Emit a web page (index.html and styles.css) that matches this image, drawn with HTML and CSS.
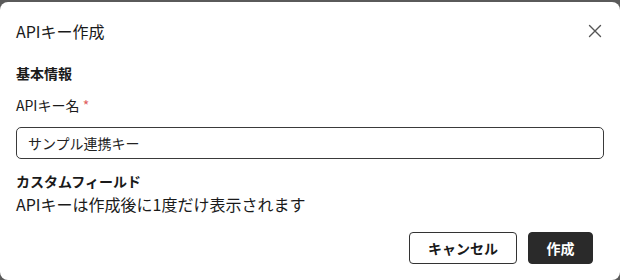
FILE: index.html
```html
<!DOCTYPE html>
<html lang="ja">
<head>
    <meta charset="UTF-8">
    <title>APIキー作成</title>
    <link rel="stylesheet" href="styles.css">
</head>
<body>
    <div class="dialog">
        <div class="dialog-header">
            <h1 class="dialog-title">APIキー作成</h1>
            <button class="close-button" aria-label="閉じる">
                <svg width="16" height="16" viewBox="0 0 16 16">
                    <path d="M2.5 2.5 L13.5 13.5 M13.5 2.5 L2.5 13.5" stroke="#555" stroke-width="1.4" stroke-linecap="round" fill="none"/>
                </svg>
            </button>
        </div>

        <h2 class="section-title">基本情報</h2>
        <label class="field-label" for="key-name">APIキー名 <span class="required">*</span></label>
        <input class="text-input" id="key-name" type="text" value="サンプル連携キー">

        <h2 class="section-title custom">カスタムフィールド</h2>
        <p class="note">APIキーは作成後に1度だけ表示されます</p>

        <div class="dialog-footer">
            <button class="button button-outline">キャンセル</button>
            <button class="button button-primary">作成</button>
        </div>
    </div>
</body>
</html>
```

FILE: styles.css
```css
body {
    margin: 0;
    padding-top: 2px;
    height: 280px;
    box-sizing: border-box;
    background: #5a5a5a;
    font-family: "Noto Sans CJK JP", "Noto Sans", sans-serif;
    color: #1a1a1a;
}

.dialog {
    height: 278px;
    box-sizing: border-box;
    background: #fff;
    border-radius: 8px;
    padding: 0 16px;
}

.dialog-header {
    display: flex;
    justify-content: space-between;
    align-items: center;
    padding: 17px 0 20px;
}

.dialog-title {
    margin: 0;
    font-size: 16px;
    font-weight: 400;
    line-height: 24px;
}

.close-button {
    display: flex;
    padding: 0;
    margin-right: 1px;
    border: none;
    background: none;
    cursor: pointer;
}

.section-title {
    margin: 0;
    font-size: 14px;
    font-weight: 700;
    line-height: 20px;
}

.section-title.custom {
    margin-top: 12px;
}

.field-label {
    display: block;
    margin-top: 12px;
    font-size: 14px;
    line-height: 20px;
}

.required {
    color: #e06060;
}

.text-input {
    display: block;
    width: 100%;
    height: 32px;
    box-sizing: border-box;
    margin-top: 12px;
    padding: 0 11px;
    border: 1px solid #3a3a3a;
    border-radius: 5px;
    font-family: inherit;
    font-size: 14px;
    color: #222;
}

.note {
    margin: 1px 0 0;
    font-size: 16px;
    line-height: 24px;
}

.dialog-footer {
    display: flex;
    justify-content: flex-end;
    gap: 11px;
    margin-top: 16px;
    padding-right: 11px;
}

.button {
    height: 32px;
    border-radius: 4px;
    font-family: inherit;
    font-size: 14px;
    font-weight: 700;
    cursor: pointer;
}

.button-outline {
    width: 108px;
    background: #fff;
    border: 1px solid #333;
    color: #1a1a1a;
}

.button-primary {
    width: 65px;
    background: #2a2a2a;
    border: 1px solid #2a2a2a;
    color: #fff;
}
```
